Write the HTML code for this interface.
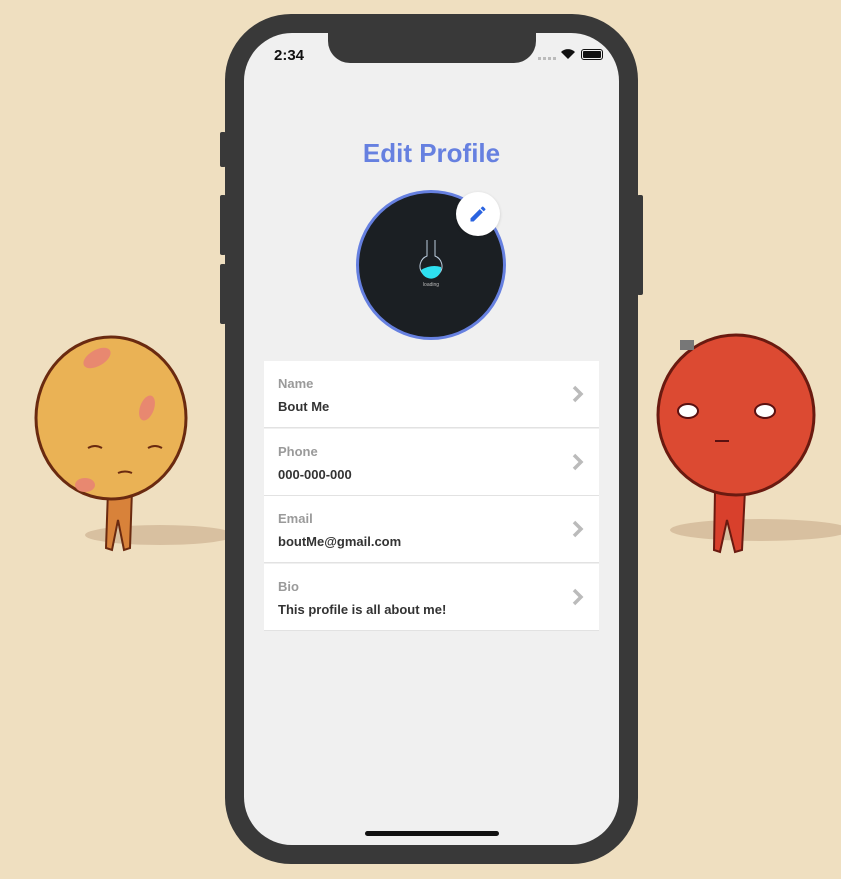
<!DOCTYPE html>
<html><head><meta charset="utf-8"><style>
*{margin:0;padding:0;box-sizing:border-box}
body{width:841px;height:879px;background:#efdfc0;position:relative;overflow:hidden;font-family:"Liberation Sans",sans-serif}
.abs{position:absolute}
.phone{left:225px;top:14px;width:413px;height:850px;background:#393939;border-radius:66px}
.screen{left:244px;top:33px;width:375px;height:812px;background:#f0f0f0;border-radius:48px;overflow:hidden}
.notch{left:84px;top:0;width:208px;height:30px;background:#393939;border-radius:0 0 22px 22px}
.btn{background:#393939;width:6px;border-radius:2px}
.title{left:0;width:375px;top:105px;text-align:center;color:#6680e0;font-weight:bold;font-size:26px}
.row{left:20px;width:335px;height:67px;background:#fff;border-bottom:1px solid #e2e2e2}
.lab{position:absolute;left:14px;top:15px;font-size:13px;color:#9a9a9a;font-weight:bold}
.val{position:absolute;left:14px;top:38px;font-size:13px;color:#333;font-weight:bold}
.chev{position:absolute;right:15px;top:24px}
</style></head><body>
<svg class="abs" style="left:0;top:0" width="841" height="879">
<ellipse cx="160" cy="535" rx="75" ry="10" fill="#d8c0a0"/>
<ellipse cx="760" cy="530" rx="90" ry="11" fill="#d8c0a0"/>
<path d="M108 490 L106 548 L112 550 L118 520 L124 550 L130 548 L132 490Z" fill="#d8823a" stroke="#6a2a10" stroke-width="2"/>
<ellipse cx="111" cy="418" rx="75" ry="81" fill="#eab255" stroke="#6a2a10" stroke-width="3"/>
<ellipse cx="97" cy="358" rx="15" ry="8" fill="#e88870" transform="rotate(-30 97 358)"/>
<ellipse cx="147" cy="408" rx="7" ry="13" fill="#e88870" transform="rotate(20 147 408)"/>
<ellipse cx="85" cy="485" rx="10" ry="7" fill="#e88870"/>
<path d="M88 448 q7-4 14 0 M148 448 q7-4 14 0 M118 473 q7-3 14 0" stroke="#6a2a10" stroke-width="2" fill="none"/>
<path d="M715 490 L714 550 L720 552 L727 520 L735 552 L742 550 L745 490Z" fill="#d8402c" stroke="#6a1a10" stroke-width="2"/>
<ellipse cx="736" cy="415" rx="78" ry="80" fill="#dc4a32" stroke="#6a1a10" stroke-width="3"/>
<ellipse cx="688" cy="411" rx="10" ry="7" fill="#fff" stroke="#5a1010" stroke-width="2"/>
<ellipse cx="765" cy="411" rx="10" ry="7" fill="#fff" stroke="#5a1010" stroke-width="2"/>
<path d="M715 441 h14" stroke="#5a1010" stroke-width="2"/>
<rect x="680" y="340" width="14" height="10" fill="#777"/>
</svg>
<div class="abs btn" style="left:220px;top:132px;height:35px"></div>
<div class="abs btn" style="left:220px;top:195px;height:60px"></div>
<div class="abs btn" style="left:220px;top:264px;height:60px"></div>
<div class="abs btn" style="left:637px;top:195px;height:100px"></div>
<div class="abs phone"></div>
<div class="abs screen">
 <div class="abs notch"></div>
 <div class="abs" style="left:30px;top:14px;font-size:15px;font-weight:bold;color:#111">2:34</div>
 <div class="abs" style="left:294px;top:24px;width:18px;height:3px;background:repeating-linear-gradient(90deg,#bbb 0 3px,transparent 3px 5px)"></div>
 <svg class="abs" style="left:316px;top:15px" width="16" height="12" viewBox="0 0 16 12"><path d="M8 11 L1 4 A10 10 0 0 1 15 4Z" fill="#111"/></svg>
 <div class="abs" style="left:337px;top:16px;width:22px;height:11px;border:1.5px solid #111;border-radius:3px;padding:1px"><div style="background:#111;width:100%;height:100%;border-radius:1px"></div></div>
 <div class="abs title">Edit Profile</div>
 <div class="abs" style="left:112px;top:157px;width:150px;height:150px;border-radius:50%;background:#1b1f23;border:3px solid #6680e0"></div>
 <svg class="abs" style="left:172px;top:205px" width="30" height="50" viewBox="0 0 30 50">
  <path d="M11 2 V18 A11 11 0 1 0 19 18 V2" fill="none" stroke="#bcd" stroke-width="1"/>
  <path d="M5 32 Q15 26 25 29 A10 10 0 0 1 5 32Z" fill="#2ee0f0"/>
  <text x="15" y="48" font-size="5" fill="#bbb" text-anchor="middle">loading</text>
 </svg>
 <div class="abs" style="left:212px;top:159px;width:44px;height:44px;border-radius:50%;background:#fff;box-shadow:0 1px 3px rgba(0,0,0,.15)"></div>
 <svg class="abs" style="left:224px;top:171px" width="20" height="20" viewBox="0 0 24 24"><path d="M3 17.25V21h3.75L17.81 9.94l-3.75-3.75L3 17.25zM20.71 7.04a1 1 0 0 0 0-1.41l-2.34-2.34a1 1 0 0 0-1.41 0l-1.83 1.83 3.75 3.75 1.83-1.83z" fill="#2a63e0"/></svg>
 <div class="abs row" style="top:328px"><div class="lab">Name</div><div class="val">Bout Me</div><svg class="chev" width="12" height="18"><path d="M2 2 L9 9 L2 16" stroke="#bbb" stroke-width="3.5" fill="none"/></svg></div>
 <div class="abs row" style="top:396px"><div class="lab">Phone</div><div class="val">000-000-000</div><svg class="chev" width="12" height="18"><path d="M2 2 L9 9 L2 16" stroke="#bbb" stroke-width="3.5" fill="none"/></svg></div>
 <div class="abs row" style="top:463px"><div class="lab">Email</div><div class="val">boutMe@gmail.com</div><svg class="chev" width="12" height="18"><path d="M2 2 L9 9 L2 16" stroke="#bbb" stroke-width="3.5" fill="none"/></svg></div>
 <div class="abs row" style="top:531px"><div class="lab">Bio</div><div class="val">This profile is all about me!</div><svg class="chev" width="12" height="18"><path d="M2 2 L9 9 L2 16" stroke="#bbb" stroke-width="3.5" fill="none"/></svg></div>
 <div class="abs" style="left:121px;top:798px;width:134px;height:5px;background:#111;border-radius:3px"></div>
</div>
</body></html>
